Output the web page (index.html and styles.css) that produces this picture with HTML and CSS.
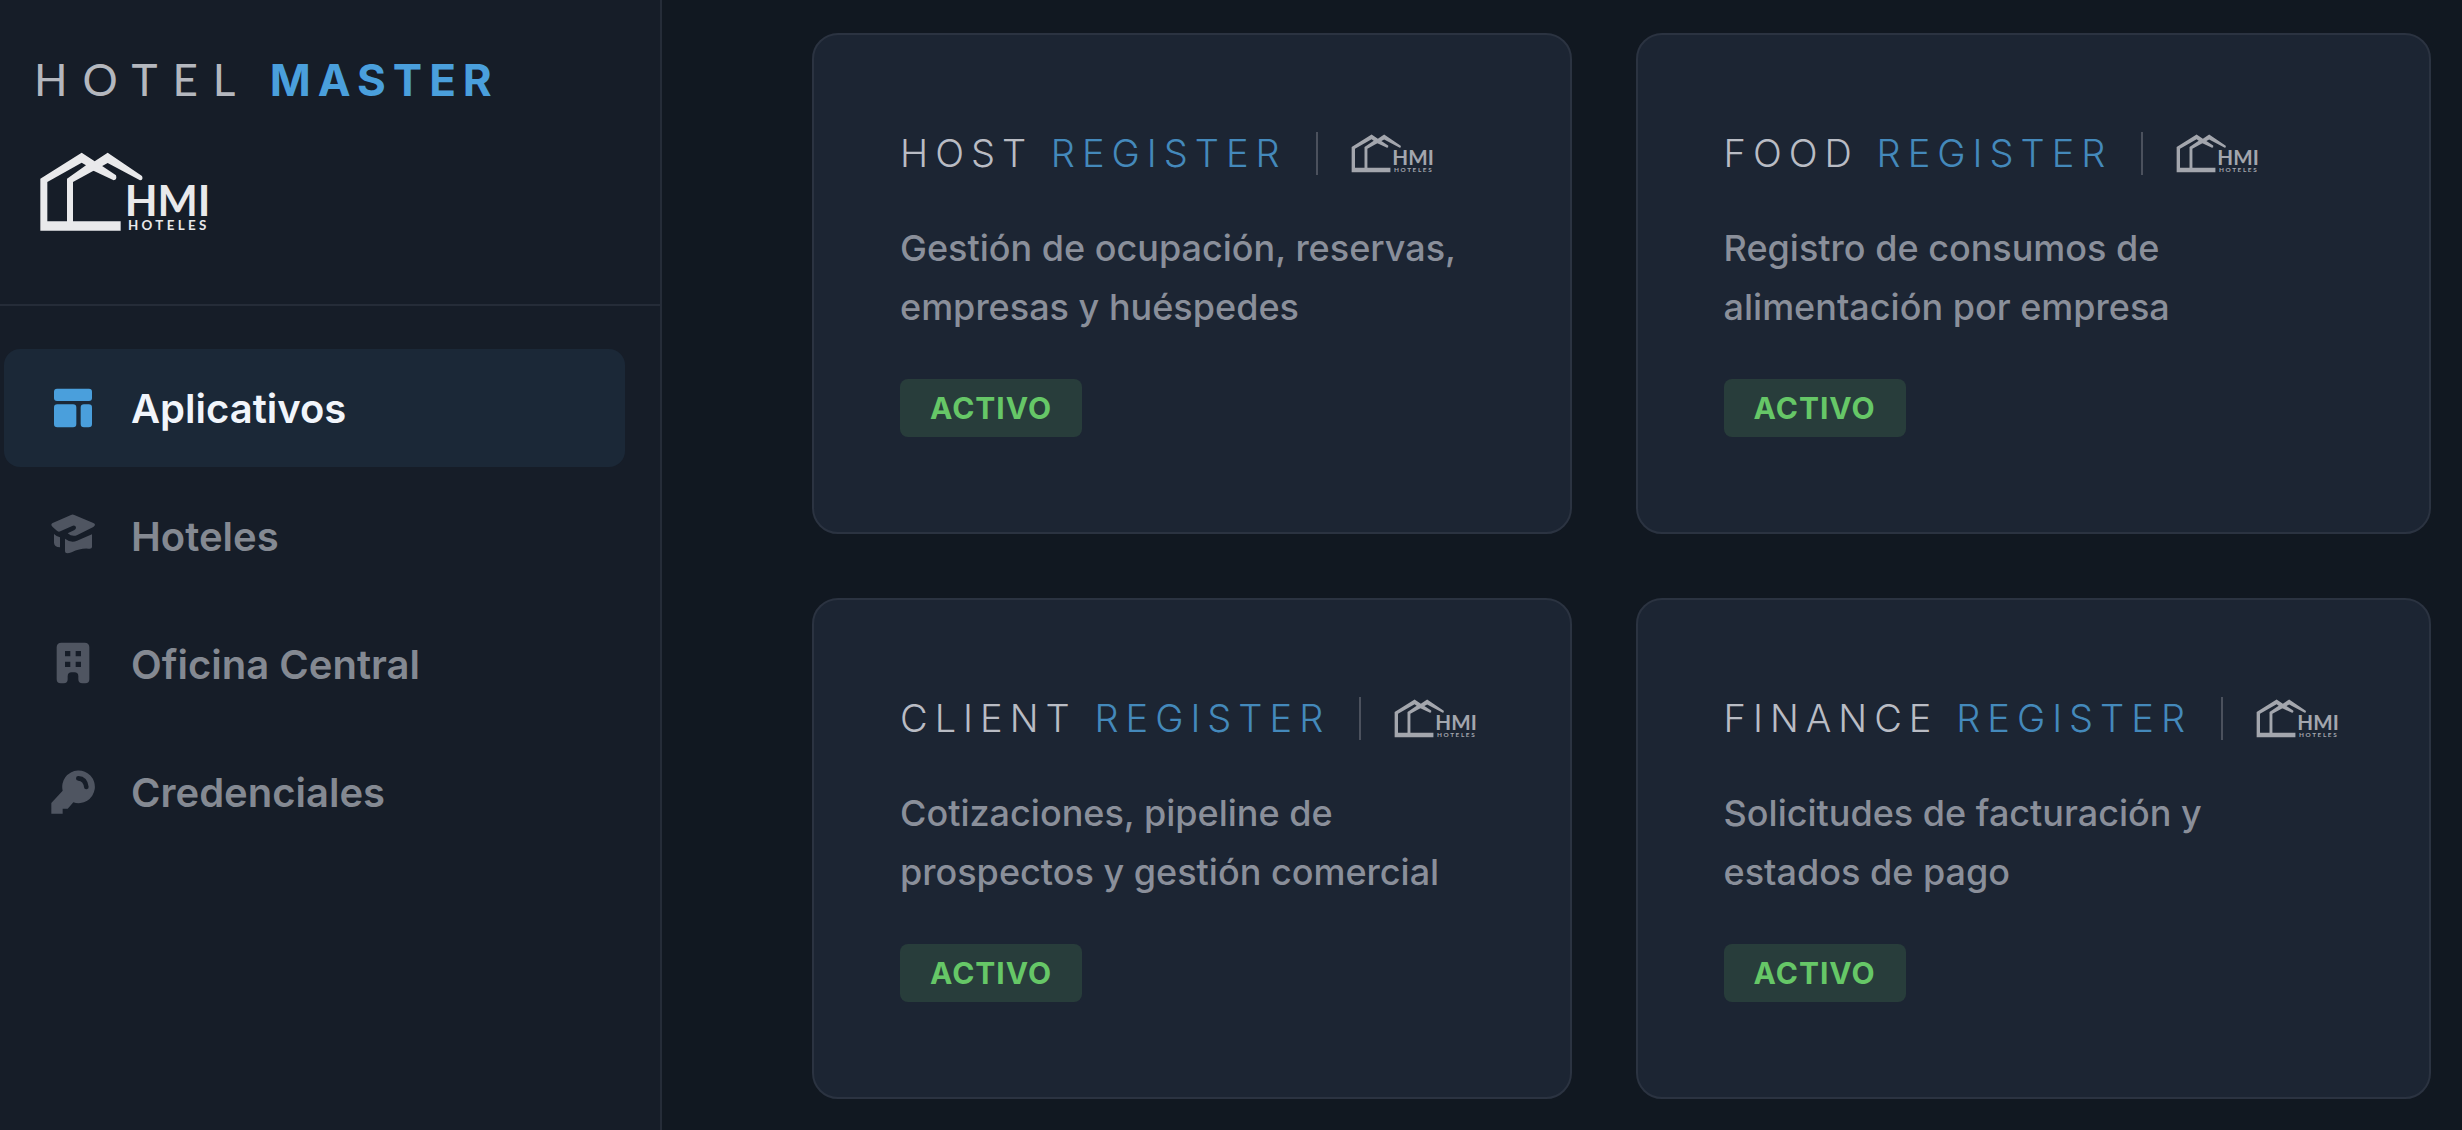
FILE: index.html
```html
<!DOCTYPE html>
<html lang="es">
<head>
<meta charset="utf-8">
<meta name="viewport" content="width=device-width, initial-scale=1">
<title>Hotel Master</title>
<link rel="stylesheet" href="styles.css">
</head>
<body>
<svg class="defs" aria-hidden="true">
  <symbol id="houses" viewBox="0 0 630 300">
    <path fill-rule="evenodd" d="M62 272V116L186 38L225 64L264 38L367 108Q372 120 361 121L264 69L160 126V244H303V272ZM83 126V244H142V116L199 76L186 68Z"/>
    <path d="M244 76L289 106Q293 119 282 121L212 88Z"/>
  </symbol>
</svg>
<div class="app">
  <aside class="sidebar">
    <header class="brand">
      <div class="brand-title"><span class="brand-light">HOTEL</span> <strong>MASTER</strong></div>
      <svg class="brand-logo" viewBox="58 36 522 240"><use href="#houses" width="630" height="300"/><text class="hmi-name" x="315" y="227">HMI</text><text class="hmi-sub" x="325" y="271">HOTELES</text></svg>
    </header>
    <nav class="nav">
      <a class="nav-item active" href="#aplicativos">
        <svg class="icon" viewBox="0 0 144 144"><rect x="15" y="14" width="114" height="37" rx="9"/><rect x="15" y="61" width="67" height="69" rx="10"/><rect x="95" y="61" width="34" height="69" rx="10"/></svg>
        Aplicativos
      </a>
      <a class="nav-item" href="#hoteles">
        <svg class="icon" viewBox="0 0 144 144"><path d="M66 9Q71 6 76 9L133 33Q143 38 133 45L85 69Q70 76 56 64L75 55Q82 52 81 45Q77 37 68 43L34 58Q28 61 22 55L11 45Q3 38 11 33ZM15 66Q23 74 33 76V106Q15 104 15 92ZM48 80Q66 94 84 86L129 67V105Q129 112 118 110Q95 108 68 121Q48 128 48 118Z"/></svg>
        Hoteles
      </a>
      <a class="nav-item" href="#oficina">
        <svg class="icon" viewBox="0 0 144 144"><path fill-rule="evenodd" d="M37 8H107Q121 8 121 22V118Q121 130 109 130H100Q88 130 88 118V109Q88 97 76 97H68Q56 97 56 109V118Q56 130 44 130H35Q23 130 23 118V22Q23 8 37 8ZM48 33V49H64V33ZM80 33V49H96V33ZM48 65V81H64V65ZM80 65V81H96V65Z"/></svg>
        Oficina Central
      </a>
      <a class="nav-item" href="#credenciales">
        <svg class="icon" viewBox="0 0 144 144"><path d="M41 68A49 49 0 1 1 73 103Q64 114 56 122H41V137H7V105Z"/><path class="shine" d="M88 31Q109 32 112 57"/></svg>
        Credenciales
      </a>
    </nav>
  </aside>
  <main class="apps">
    <article class="card">
      <h2 class="card-title"><span>HOST <em>REGISTER</em></span><svg class="card-logo" viewBox="58 36 522 240"><use href="#houses" width="630" height="300"/><text class="hmi-name" x="315" y="227">HMI</text><text class="hmi-sub" x="325" y="271">HOTELES</text></svg></h2>
      <p class="card-text">Gestión de ocupación, reservas, empresas y huéspedes</p>
      <span class="badge">ACTIVO</span>
    </article>
    <article class="card">
      <h2 class="card-title"><span>FOOD <em>REGISTER</em></span><svg class="card-logo" viewBox="58 36 522 240"><use href="#houses" width="630" height="300"/><text class="hmi-name" x="315" y="227">HMI</text><text class="hmi-sub" x="325" y="271">HOTELES</text></svg></h2>
      <p class="card-text">Registro de consumos de alimentación por empresa</p>
      <span class="badge">ACTIVO</span>
    </article>
    <article class="card">
      <h2 class="card-title"><span>CLIENT <em>REGISTER</em></span><svg class="card-logo" viewBox="58 36 522 240"><use href="#houses" width="630" height="300"/><text class="hmi-name" x="315" y="227">HMI</text><text class="hmi-sub" x="325" y="271">HOTELES</text></svg></h2>
      <p class="card-text">Cotizaciones, pipeline de prospectos y gestión comercial</p>
      <span class="badge">ACTIVO</span>
    </article>
    <article class="card">
      <h2 class="card-title"><span>FINANCE <em>REGISTER</em></span><svg class="card-logo" viewBox="58 36 522 240"><use href="#houses" width="630" height="300"/><text class="hmi-name" x="315" y="227">HMI</text><text class="hmi-sub" x="325" y="271">HOTELES</text></svg></h2>
      <p class="card-text">Solicitudes de facturación y estados de pago</p>
      <span class="badge">ACTIVO</span>
    </article>
  </main>
</div>
</body>
</html>
```
FILE: styles.css
```css
* { box-sizing: border-box; }

body {
  margin: 0;
  background: #111821;
  color: #8a8f9a;
  font-family: Inter, "Liberation Sans", sans-serif;
}

.defs {
  display: block;
  width: 0;
  height: 0;
}

.app {
  display: flex;
  min-height: 100vh;
}

/* Sidebar */
.sidebar {
  flex: 0 0 662px;
  background: #161d28;
  border-right: 2px solid #252c38;
}

.brand {
  padding: 53px 36px 72px 34px;
  border-bottom: 2px solid #252c38;
}

.brand-title {
  margin-bottom: 46px;
  font-size: 44px;
  line-height: 52px;
  letter-spacing: 7px;
  white-space: nowrap;
}

.brand-light {
  color: #b4b7be;
  font-family: Lato, sans-serif;
  font-weight: 400;
  letter-spacing: 15px;
}

.brand-title strong {
  color: #4a9fdc;
  font-weight: 700;
}

.brand-logo {
  display: block;
  width: 174px;
  height: 80px;
  margin-left: 5px;
  overflow: visible;
  fill: #e9e9eb;
}

.hmi-name,
.hmi-sub {
  font-family: Lato, sans-serif;
  font-weight: 700;
}

.hmi-name { font-size: 128px; }

.hmi-sub {
  font-size: 40px;
  letter-spacing: 10px;
}

.nav {
  display: flex;
  flex-direction: column;
  gap: 10px;
  padding: 43px 35px 43px 4px;
}

.nav-item {
  display: flex;
  align-items: center;
  gap: 34px;
  height: 118px;
  padding: 0 45px;
  border-radius: 16px;
  color: #848992;
  font-size: 40px;
  font-weight: 600;
  text-decoration: none;
}

.nav-item.active {
  background: #1b2837;
  color: #f1f5fb;
}

.icon {
  width: 48px;
  height: 48px;
  fill: #4f5561;
}

.active .icon { fill: #4a9fdc; }

.shine {
  fill: none;
  stroke: #161d28;
  stroke-width: 14;
  stroke-linecap: round;
}

/* Application cards */
.apps {
  flex: 1;
  display: grid;
  grid-template-columns: 1fr 1fr;
  align-content: start;
  gap: 64px;
  padding: 33px 31px 31px 150px;
}

.card {
  padding: 97px 86px 95px;
  background: #1c2533;
  border: 2px solid #2b3341;
  border-radius: 26px;
}

.card-title {
  display: flex;
  align-items: center;
  margin: 0 0 44px;
  color: #b9bcc4;
  font-size: 38px;
  font-weight: 350;
  line-height: 43px;
  letter-spacing: 7px;
  white-space: nowrap;
}

.card-title em {
  color: #4489bb;
  font-style: normal;
}

.card-logo {
  flex: none;
  width: 122px;
  height: 43px;
  margin-left: 29px;
  padding: 2px 3px 2px 33px;
  border-left: 2px solid #4b515d;
  overflow: visible;
  fill: #a3a6ad;
  letter-spacing: 0;
}

.card-text {
  margin: 0 0 42px;
  font-size: 36px;
  font-weight: 450;
  line-height: 59px;
}

.badge {
  display: inline-block;
  padding: 0 30px;
  border-radius: 8px;
  background: #283d3b;
  color: #66c767;
  font-size: 30px;
  font-weight: 750;
  line-height: 58px;
  letter-spacing: 1px;
  vertical-align: top;
}
```
